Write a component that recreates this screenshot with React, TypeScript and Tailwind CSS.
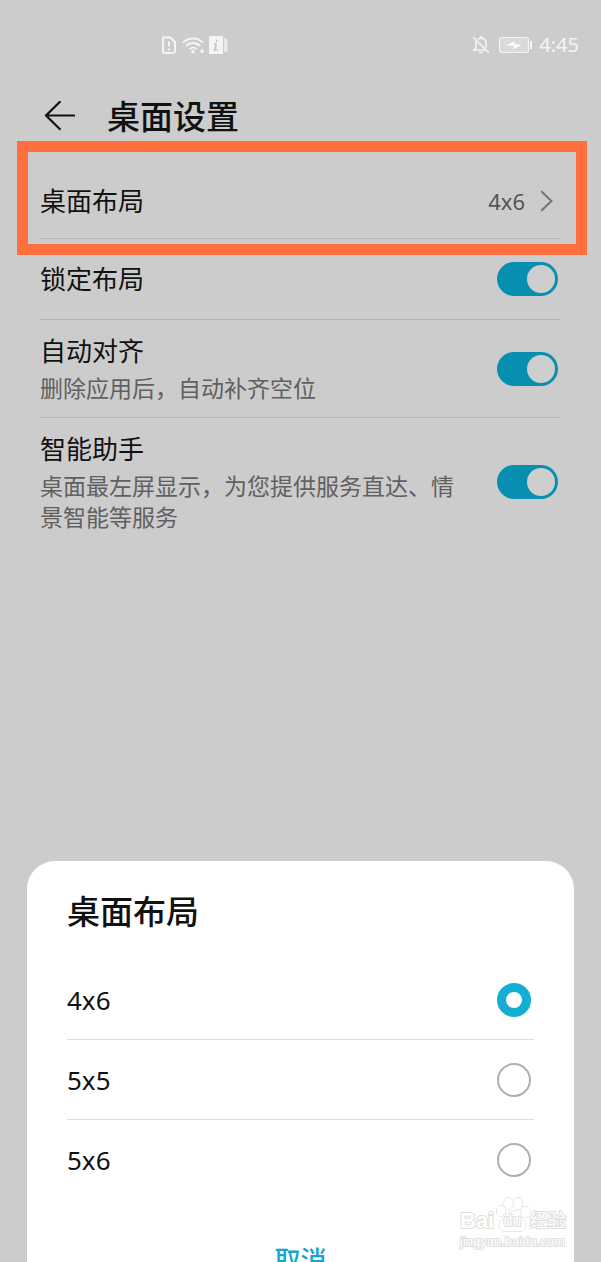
import { useState } from 'react';

type ToggleItem = { id: string; title: string; detail?: string };

const toggles: ToggleItem[] = [
  { id: 'lock', title: '锁定布局' },
  { id: 'align', title: '自动对齐', detail: '删除应用后，自动补齐空位' },
  { id: 'assistant', title: '智能助手', detail: '桌面最左屏显示，为您提供服务直达、情景智能等服务' },
];

const layouts = ['4x6', '5x5', '5x6'];

function StatusBar() {
  return (
    <div className="flex h-[90px] items-center pl-[161px] pr-[22px] text-[#f4f4f4]">
      <svg className="h-5 w-[68px]" viewBox="0 0 68 20" fill="none" stroke="currentColor" aria-hidden="true">
        <path d="M2 2.500h7.500L14 7v9a2 2 0 0 1-2 2H3a1 1 0 0 1-1-1z" strokeWidth="2" />
        <path d="M8 6.500v5M8 13.500v2" strokeWidth="2" />
        <path d="M22 7.500c5.500-5.500 14.500-5.500 20 0M25 11c4-4 10-4 14 0M28.500 14.200c2-2 5-2 7 0" strokeWidth="2" />
        <circle cx="32" cy="16.700" r="1.800" fill="currentColor" stroke="none" />
        <path d="M39 16.500h4M41 14v4" strokeWidth="1.500" />
        <path d="M48 1h14v18H48z" fill="currentColor" stroke="none" />
        <path d="M63 3h1.500a2 2 0 0 1 2 2v10a2 2 0 0 1-2 2H63z" fill="currentColor" stroke="none" opacity="0.7" />
        <path d="M56 5l-.4 2M55.200 9l-1.200 6M53 9h2.500M52.500 15h4" stroke="#c4c4c4" strokeWidth="1.600" />
      </svg>
      <div className="ml-auto flex items-center gap-[7px]">
        <svg className="h-5 w-5" viewBox="0 0 20 20" fill="none" stroke="currentColor" strokeWidth="1.700" aria-hidden="true">
          <path d="M5 6.500v5.500L3 15h12.500M15 12.500V8c0-3-2-4.800-5-4.800-1.300 0-2.300.4-3.200 1M10 1v2M8 17.500h4M2 2l16 16" />
        </svg>
        <svg className="h-5 w-[34px]" viewBox="0 0 34 20" fill="none" aria-hidden="true">
          <rect x="1.500" y="2.500" width="29" height="15" rx="2.500" fill="#dadada" stroke="currentColor" strokeWidth="1.200" />
          <path d="M33 6v8" stroke="currentColor" strokeWidth="2" />
          <path d="M8 10.500l9-4.500-1 3.300 8 .4-9 4.500 1.200-3.500z" fill="#fff" />
        </svg>
        <span className="text-[20px] leading-6">4:45</span>
      </div>
    </div>
  );
}

function Watermark() {
  return (
    <div
      className="absolute right-[7px] bottom-[13px] h-[52px] w-[107px] text-white [paint-order:stroke] [-webkit-text-stroke:2px_#dedede]"
      aria-hidden="true"
    >
      <svg className="absolute top-0 left-[35px] h-9 w-9" viewBox="0 0 36 36" fill="#fff" stroke="#d4d4d4">
        <path d="M18 14c4 0 5.500 4 9 7.500 5 4.500 5 12-2 13H11C3 34 2.500 26 8 21.500 12 18 13.500 14 18 14z" />
        <ellipse cx="6" cy="14" rx="4.500" ry="5.500" />
        <ellipse cx="13.500" cy="6.500" rx="4.500" ry="5.800" />
        <ellipse cx="23" cy="6.500" rx="4.500" ry="5.800" />
        <ellipse cx="30.500" cy="15" rx="4.500" ry="5.500" />
      </svg>
      <div className="relative flex h-9 items-end font-['Liberation_Sans','Noto_Sans_CJK_SC',sans-serif] leading-6">
        <span className="w-[35px] text-[22px] font-bold">Bai</span>
        <span className="w-[35px] text-center text-[16px]">du</span>
        <span className="text-[18px]">经验</span>
      </div>
      <div className="relative pt-px font-['Liberation_Sans',sans-serif] text-[13px] leading-[15px]">
        jingyan.baidu.com
      </div>
    </div>
  );
}

export default function App() {
  const [layout, setLayout] = useState('4x6');
  const [enabled, setEnabled] = useState<Record<string, boolean>>({ lock: true, align: true, assistant: true });

  return (
    <div className="flex min-h-screen flex-col bg-[#cccccc] font-['Noto_Sans','Noto_Sans_CJK_SC',sans-serif] text-[#111111]">
      <StatusBar />
      <header className="flex h-[54px] items-center gap-8 px-[43px]">
        <button type="button" aria-label="返回" className="h-8 w-8">
          <svg className="h-8 w-8" viewBox="0 0 32 32" fill="none" stroke="currentColor" strokeWidth="2.200" aria-hidden="true">
            <path d="M32 14.500H3M17.500 .2L3 14.500l14.500 14.300" />
          </svg>
        </button>
        <h1 className="text-[33px] leading-10 font-medium">桌面设置</h1>
      </header>

      <main className="px-10 pt-5">
        <div className="relative">
          <button type="button" className="flex h-[75px] w-full items-center border-b border-[#b4b4b4] text-left">
            <span className="flex-1 text-[26px] leading-9">桌面布局</span>
            <span className="text-[22px] leading-8 text-[#555555]">4x6</span>
            <svg className="mr-2 ml-4 h-6 w-3" viewBox="0 0 12 24" fill="none" stroke="#757575" strokeWidth="2" aria-hidden="true">
              <path d="M0 2l10.500 10L0 22" />
            </svg>
          </button>
          <div className="pointer-events-none absolute -top-[23px] -right-[26px] -bottom-4 -left-[23px] border-[11px] border-[#ff6f3d]" />
        </div>
        {toggles.map(({ id, title, detail }) => (
          <label
            key={id}
            className="flex min-h-[81px] items-center justify-between gap-8 border-b border-[#b4b4b4] py-[13px] pr-[3px] last:border-b-0"
          >
            <span className="flex flex-col gap-1">
              <span className="text-[26px] leading-9">{title}</span>
              {detail && <span className="text-[23px] leading-[31px] text-[#606060]">{detail}</span>}
            </span>
            <input
              type="checkbox"
              role="switch"
              aria-label={title}
              checked={enabled[id]}
              onChange={(e) => setEnabled({ ...enabled, [id]: e.target.checked })}
              className="flex h-[34px] w-[61px] shrink-0 appearance-none items-center rounded-full bg-[#999999] px-[3px] before:h-7 before:w-7 before:rounded-full before:bg-[#cecece] checked:justify-end checked:bg-[#078fb2]"
            />
          </label>
        ))}
      </main>

      <section
        role="dialog"
        aria-labelledby="sheet-title"
        className="relative mx-[27px] mt-auto rounded-t-[28px] bg-white px-10 pt-[31px]"
      >
        <h2 id="sheet-title" className="text-[33px] leading-10 font-medium">
          桌面布局
        </h2>
        <div role="radiogroup" aria-labelledby="sheet-title" className="mt-7">
          {layouts.map((option) => (
            <label
              key={option}
              className="flex h-20 items-center justify-between border-b border-[#dddddd] pr-[3px] text-[26px] leading-9 last:border-b-0"
            >
              {option}
              <input
                type="radio"
                name="layout"
                value={option}
                checked={layout === option}
                onChange={() => setLayout(option)}
                className="h-[34px] w-[34px] appearance-none rounded-full border-2 border-[#b0b0b0] checked:border-[9px] checked:border-[#14add3]"
              />
            </label>
          ))}
        </div>
        <button
          type="button"
          className="mx-auto mt-[47px] block h-[15px] overflow-hidden text-[26px] leading-[26px] font-medium text-[#15a5ca]"
        >
          取消
        </button>
        <Watermark />
      </section>
    </div>
  );
}
